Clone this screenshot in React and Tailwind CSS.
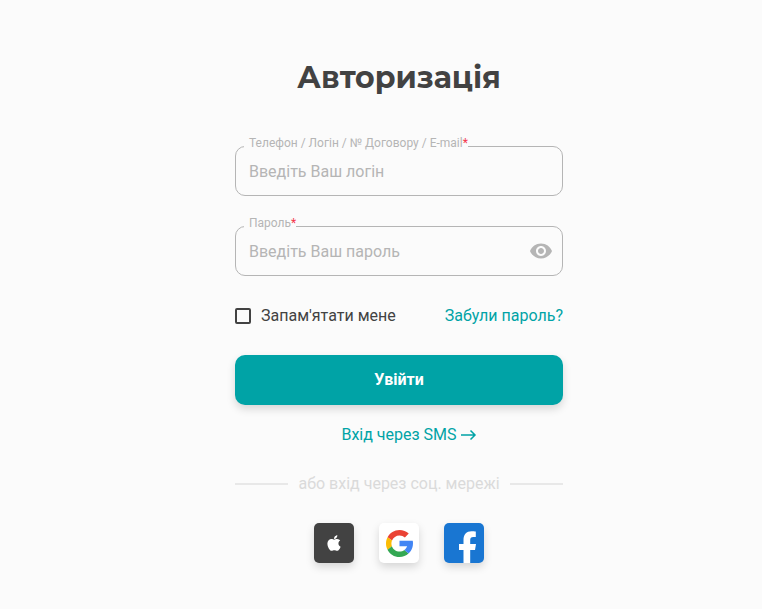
import React, { useState } from 'react';
import { FaApple } from 'react-icons/fa';
import { MdVisibility, MdVisibilityOff } from 'react-icons/md';

function GoogleLogo() {
  return (
    <svg viewBox="4 4 40 40" className="size-[27px]" aria-hidden="true">
      <path fill="#EA4335" d="M6.3 14.7l6.6 4.8C14.7 15.1 19 12 24 12c3.1 0 5.8 1.2 8 3l5.7-5.7C34 6.1 29.3 4 24 4 16.3 4 9.7 8.3 6.3 14.7z" />
      <path fill="#FBBC05" d="M6.3 14.7C4.8 17.5 4 20.6 4 24s.8 6.5 2.3 9.2l6.5-5c-.5-1.3-.8-2.7-.8-4.2 0-1.6.3-3.1.9-4.5z" />
      <path fill="#34A853" d="M24 44c5.2 0 9.9-2 13.4-5.2l-6.2-5.2C29.2 35.1 26.7 36 24 36c-5.2 0-9.6-3.3-11.3-7.9l-6.5 5C9.5 39.6 16.2 44 24 44z" />
      <path fill="#4285F4" d="M43.6 20H24v8h11.3c-.8 2.2-2.2 4.2-4.1 5.6l6.2 5.2C37 39.2 44 34 44 24c0-1.3-.1-2.7-.4-4z" />
    </svg>
  );
}

function FacebookLogo() {
  return (
    <svg viewBox="0 0 40 40" className="size-10" fill="white" aria-hidden="true">
      <path d="M19.5 40V27H15v-6h4.500v-4c0-5.500 3-8.700 8-8.700 1.700 0 3.300.1 4.300.3V14h-2.500c-2.300 0-3.100 1.200-3.100 3v4H32l-1 6h-4.800v13z" />
    </svg>
  );
}

function Field({ id, label, children, ...inputProps }) {
  return (
    <div className="relative">
      <label
        htmlFor={id}
        className="absolute -top-[11px] left-[9px] bg-[#fbfbfb] pl-[5px] text-xs leading-4 text-[#b5b5b5]"
      >
        {label}
        <span className="text-[#f4364c]">*</span>
      </label>
      <div className="flex h-[50px] items-center rounded-[10px] border border-[#b5b5b5] pr-[9px] pl-[13px]">
        <input
          id={id}
          className="min-w-0 flex-1 bg-transparent pt-0.5 text-base text-[#424242] outline-none placeholder:text-[#b5b5b5]"
          {...inputProps}
        />
        {children}
      </div>
    </div>
  );
}

function App() {
  const [showPassword, setShowPassword] = useState(false);
  const [remember, setRemember] = useState(false);

  return (
    <main className="min-h-screen bg-[#fbfbfb] pt-[58px] pr-4 pb-10 pl-[52px] font-['Roboto',sans-serif] text-base text-[#424242]">
      <form className="mx-auto w-full max-w-[328px]" onSubmit={(e) => e.preventDefault()}>
        <h1 className="text-center font-['Montserrat','Inter',sans-serif] text-[30px] leading-10 font-bold">
          Авторизація
        </h1>

        <div className="mt-12 flex flex-col gap-[30px]">
          <Field
            id="login"
            label="Телефон / Логін / № Договору / E-mail"
            type="text"
            placeholder="Введіть Ваш логін"
          />
          <Field
            id="password"
            label="Пароль"
            type={showPassword ? 'text' : 'password'}
            placeholder="Введіть Ваш пароль"
          >
            <button
              type="button"
              aria-label="Показати пароль"
              onClick={() => setShowPassword(!showPassword)}
              className="text-[#b5b5b5]"
            >
              {showPassword ? <MdVisibilityOff size={24} /> : <MdVisibility size={24} />}
            </button>
          </Field>
        </div>

        <div className="mt-7 flex items-center justify-between">
          <label className="flex items-center gap-[10px]">
            <input
              type="checkbox"
              checked={remember}
              onChange={(e) => setRemember(e.target.checked)}
              className="size-4 appearance-none rounded-[2px] border-2 border-[#424242] checked:bg-[#00a3a6]"
            />
            Запам'ятати мене
          </label>
          <a href="#forgot" className="text-[#00a3a6]">
            Забули пароль?
          </a>
        </div>

        <button
          type="submit"
          className="mt-[27px] h-[50px] w-full rounded-[10px] bg-[#00a3a6] font-bold text-white shadow-[0_4px_8px_rgba(0,0,0,0.15)]"
        >
          Увійти
        </button>

        <div className="mt-[18px] flex justify-center pl-5">
          <a href="#sms" className="flex items-center gap-1 text-[#00a3a6]">
            Вхід через SMS
            <svg viewBox="0 0 16 16" className="size-4" fill="none" stroke="currentColor" strokeWidth="1.5" aria-hidden="true">
              <path d="M0 8h14M9.500 3.500 14 8l-4.500 4.500" />
            </svg>
          </a>
        </div>

        <div className="mt-[25px] flex items-center gap-[10px] text-[#dadada]">
          <span className="h-0.5 flex-1 bg-[#e8e8e8]" />
          або вхід через соц. мережі
          <span className="h-0.5 flex-1 bg-[#e8e8e8]" />
        </div>

        <div className="mt-[27px] flex justify-center gap-[25px]">
          <button
            type="button"
            aria-label="Apple"
            className="flex size-10 items-center justify-center rounded-[5px] bg-[#424242] text-white shadow-[0_4px_8px_rgba(0,0,0,0.15)]"
          >
            <FaApple size={18} />
          </button>
          <button
            type="button"
            aria-label="Google"
            className="flex size-10 items-center justify-center rounded-[5px] bg-white shadow-[0_4px_8px_rgba(0,0,0,0.15)]"
          >
            <GoogleLogo />
          </button>
          <button
            type="button"
            aria-label="Facebook"
            className="flex size-10 items-center justify-center rounded-[5px] bg-[#1976d2] shadow-[0_4px_8px_rgba(0,0,0,0.15)]"
          >
            <FacebookLogo />
          </button>
        </div>
      </form>
    </main>
  );
}

export default App;
